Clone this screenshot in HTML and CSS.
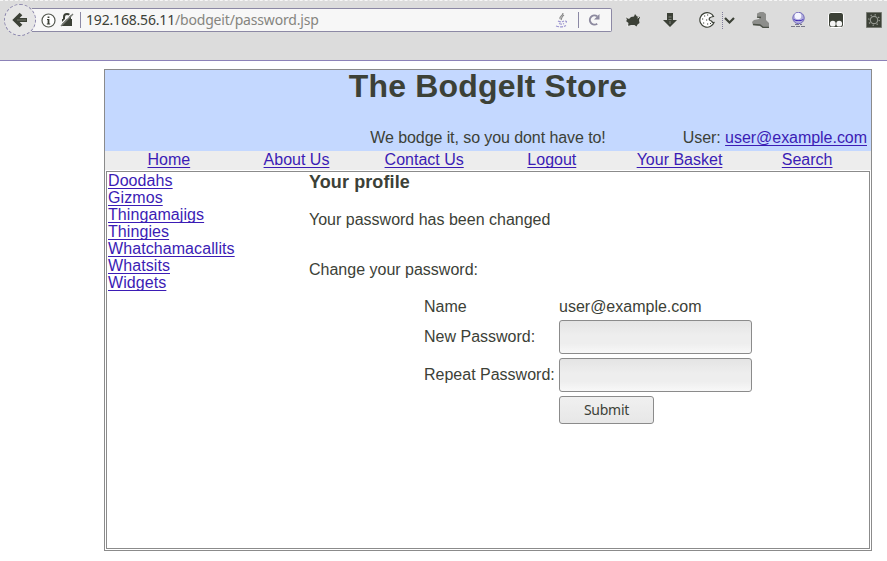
FILE: index.html
```html
<!DOCTYPE html>
<html lang="en">
<head>
<meta charset="utf-8">
<title>The BodgeIt Store</title>
<link rel="stylesheet" href="styles.css">
</head>
<body>
<header class="toolbar">
  <div class="address-row">
    <div class="back">
      <svg width="16" height="16" viewBox="0 0 16 16"><path d="M9 2 3 8l6 6M3 8h12" fill="none" stroke="#3c4137" stroke-width="3.800"/><path d="M5 8h9" stroke="#777b70" stroke-width="1"/></svg>
    </div>
    <div class="address">
      <svg class="info" width="15" height="15" viewBox="0 0 15 15"><circle cx="7.5" cy="7.5" r="6.500" fill="#fff" stroke="#555950" stroke-width="1.200"/><path d="M7.500 6v5M7.500 3.500v1.500" fill="none" stroke="#3c4137" stroke-width="1.800"/><path d="M6 6.500h1.500M5.800 11h3.400" stroke="#3c4137"/></svg>
      <svg class="lock" width="14" height="14" viewBox="0 0 14 14"><path d="M2 6h10v7H2z" fill="#3c4137"/><path d="M4 6V4a3 3 0 0 1 6 0v2" fill="none" stroke="#3c4137" stroke-width="2"/><path d="M0 12 12 0" stroke="#f7f7f7" stroke-width="1.500"/><path d="M1 13 13 1" stroke="#777b75" stroke-width="1.500"/></svg>
      <span class="divider"></span>
      <span class="url"><span class="host">192.168.56.11</span>/bodgeit/password.jsp</span>
      <svg class="java" width="14" height="16" viewBox="0 0 14 16" fill="none"><path d="M8 1C8 4 4 4 5 7M9 3C6 5 7 6 6 8" stroke="#8b8b8b" stroke-width="1.200"/><path d="M3 9q3 1.600 6 0M4 11.500q3 1.300 5 0M1 14q6 2 10-.5M10 9q3 0 0 2.500" stroke="#9c95d0" stroke-width="1.200" stroke-dasharray="3 1"/></svg>
      <span class="divider short"></span>
      <svg class="reload" width="12" height="12" viewBox="0 0 12 12"><path d="M9.200 9.700a4.600 4.600 0 1 1 0-7.400" fill="none" stroke="#8d8a9f" stroke-width="2"/><path d="M11.500 0v5.500H6z" fill="#8d8a9f"/></svg>
    </div>
    <div class="tools">
      <svg width="16" height="16" viewBox="0 0 16 16"><path d="m1 5 3 2 2-2 3-.5L10 2l2 2.500 3 .5-1 3 .5 3-2 1.500-1 2-2-1.500H6L3 14l.5-3L1 9l1-1z" fill="#3c4137"/><path d="m1 4.500 2 2M14 5l-1.500 1M3 13l-.8 1.500" stroke="#f4f4f4"/></svg>
      <svg width="14" height="14" viewBox="0 0 14 14"><path d="M4 0h6v7h4l-7 7-7-7h4z" fill="#3c4137"/><path d="M5.500 4h3M5.500 6.500h3M7 8v3" stroke="#80847c"/></svg>
      <svg width="16" height="16" viewBox="0 0 16 16"><path d="M10.500 1A7.300 7.300 0 1 0 15 10.500q-2 .3-2.500-1.500-3-.5-2-3 1-1 4-1.500Q13.500 2 10.500 1z" fill="#fff" stroke="#3c4137" stroke-width="1.200"/><path d="M5 4h1.200M8 3h1.200M3 7h1.200M7 8h1.200M4 11h1.200M8 12h1.200M11 11.500h1" stroke="#3c4137" stroke-width="1.200"/></svg>
      <svg class="chevron" width="13" height="17" viewBox="0 0 13 17"><path d="M.5 0v17" stroke="#817d9c" stroke-dasharray="1 1"/><path d="m3 6 4.500 4.500L12 6" fill="none" stroke="#3c4137" stroke-width="2.200"/></svg>
      <svg width="17" height="16" viewBox="0 0 17 16"><path d="M5 1.500 8 0h3.500L14 2v6l3 3v5h-6l-3-2-7-1-1-3 2-2 5-1 1-2-3-1z" fill="#8d8e8b"/><path d="M1 12.500 8 13l3 2.300h6M5 5 9 5.500" stroke="#4c5148" fill="none" stroke-width="1.300"/></svg>
      <svg width="15" height="16" viewBox="0 0 15 16"><circle cx="7.500" cy="6" r="5.700" fill="#b1addd" stroke="#7168ba"/><circle cx="7" cy="4" r="3.300" fill="#f5f5ff"/><path d="M2.500 7q5 2.500 10 0-.5 2-5 2t-5-2" fill="#3921b8"/><path d="M0 14.500h15M4 12.500h7" stroke="#777787" stroke-width="1.200" stroke-dasharray="4 1"/></svg>
      <svg width="16" height="16" viewBox="0 0 16 16"><rect x=".5" y=".5" width="15" height="15" rx="2.500" fill="#3c4137" stroke="#fff"/><circle cx="4.800" cy="11.700" r="2.900" fill="#f5f5f5"/><circle cx="11.200" cy="11.700" r="2.900" fill="#f5f5f5"/></svg>
      <svg width="16" height="16" viewBox="0 0 16 16"><path d="M.5.500h15v15H.5z" fill="#3c4137" stroke="#777a73"/><circle cx="8" cy="8" r="3.700" fill="none" stroke="#92958e" stroke-width="1.200"/><circle cx="8" cy="8" r="5.300" fill="none" stroke="#92958e" stroke-width="1.500" stroke-dasharray="1.200 2.963"/></svg>
    </div>
  </div>
</header>
<main class="store">
  <div class="banner">
    <h1>The BodgeIt Store</h1>
    <div class="tagline">
      <span></span>
      <span class="slogan">We bodge it, so you dont have to!</span>
      <span class="user">User: <a href="#">user@example.com</a></span>
    </div>
  </div>
  <nav class="nav">
    <a href="#">Home</a><a href="#">About Us</a><a href="#">Contact Us</a><a href="#">Logout</a><a href="#">Your Basket</a><a href="#">Search</a>
  </nav>
  <div class="panel">
    <div class="categories">
      <a href="#">Doodahs</a><a href="#">Gizmos</a><a href="#">Thingamajigs</a><a href="#">Thingies</a><a href="#">Whatchamacallits</a><a href="#">Whatsits</a><a href="#">Widgets</a>
    </div>
    <section class="profile">
      <h3>Your profile</h3>
      <p class="notice">Your password has been changed</p>
      <p class="prompt">Change your password:</p>
      <form class="form">
        <span>Name</span><span>user@example.com</span>
        <label for="p1">New Password:</label><input id="p1" type="password">
        <label for="p2">Repeat Password:</label><input id="p2" type="password">
        <button type="button">Submit</button>
      </form>
    </section>
  </div>
</main>
</body>
</html>
```
FILE: styles.css
```css
* { box-sizing: border-box; }
body {
  margin: 0;
  height: 561px;
  overflow: hidden;
  background: #fff;
  color: #3c4137;
  font: 16px/17px "Liberation Sans", Arial, sans-serif;
}
svg { display: block; flex: none; }
h1, h3, p { margin: 0; }
a {
  color: #3b1cb5;
  text-decoration: underline;
  text-decoration-thickness: 1px;
  text-underline-offset: 2px;
  text-decoration-skip-ink: none;
}

/* Browser toolbar */
.toolbar {
  height: 61px;
  padding: 3px 5px 0 4px;
  background: #dcdcdc;
  border-top: 1px dashed #f6f6f6;
  border-bottom: 1px solid #8c82b8;
}
.address-row { display: flex; align-items: center; height: 32px; }
.back {
  display: flex;
  align-items: center;
  justify-content: center;
  width: 32px;
  height: 32px;
  border: 1px dashed #8c87ae;
  border-radius: 50%;
  background: #e6e6e6;
  z-index: 1;
}
.address {
  display: flex;
  align-items: center;
  width: 580px;
  height: 24px;
  margin-left: -4px;
  padding-left: 9px;
  border: 1px solid #8c89a5;
  border-left: 0;
  border-radius: 0 2px 2px 0;
  background: #f7f7f7;
}
.lock { margin-left: 4px; }
.divider { width: 1px; height: 16px; margin-left: 6px; background: #8c89a5; }
.url {
  width: 470px;
  margin-left: 5px;
  color: #85857f;
  font: 14px/20px "Noto Sans", sans-serif;
  letter-spacing: -0.18px;
  white-space: nowrap;
}
.host { color: #3c4137; }
.java { margin-left: -1px; }
.divider.short { margin-left: 9px; }
.reload { margin-left: 9px; }
.tools {
  display: flex;
  flex: 1;
  align-items: center;
  justify-content: space-between;
  margin-left: 13px;
}
.chevron { margin: 0 -6px 0 -15px; }

/* Store page */
.store {
  width: 768px;
  height: 482px;
  margin: 8px 0 0 104px;
  padding-bottom: 1px;
  border: 1px solid #8b8b8b;
}
.banner { height: 81px; background: #c4d8ff; text-align: center; }
h1 { font-size: 32px; line-height: 32px; letter-spacing: 0.18px; }
.tagline {
  display: grid;
  grid-template-columns: 1fr 300px 1fr;
  padding: 27px 4px 0 0;
}
.slogan { padding-left: 4px; letter-spacing: -0.08px; }
.user { text-align: right; letter-spacing: -0.04px; }
.nav {
  display: grid;
  grid-template-columns: repeat(6, 1fr);
  height: 19px;
  background: #ededed;
  text-align: center;
}
.panel {
  display: flex;
  height: 378px;
  margin: 1px 1px 0;
  border: 1px solid #8b8b8b;
}
.categories {
  display: flex;
  flex-direction: column;
  align-items: flex-start;
  width: 202px;
  padding-left: 1px;
  letter-spacing: 0.08px;
}
h3 { font-size: 18px; line-height: 20px; letter-spacing: 0.1px; }
.notice { margin-top: 19px; }
.prompt { margin-top: 33px; }
.form {
  display: grid;
  grid-template-columns: 131px 193px;
  grid-template-rows: 18px 34px 34px 28px;
  gap: 4px;
  align-items: center;
  margin: 20px 0 0 115px;
  white-space: nowrap;
}
.form span, .form label { padding-bottom: 2px; }
.form input {
  width: 193px;
  height: 34px;
  padding: 4px;
  border: 1px solid #8b8b8b;
  border-radius: 3px;
  background: linear-gradient(#e4e4e4, #eee 45%, #eee 70%, #f8f8f8);
}
.form button {
  grid-column: 2;
  width: 95px;
  height: 28px;
  padding: 0;
  border: 1px solid #8b8b8b;
  border-radius: 3px;
  background: linear-gradient(#f0f0f0, #e7e7e7);
  color: #3c4137;
  font: 14px/20px "Noto Sans", sans-serif;
  letter-spacing: -0.25px;
}
```
